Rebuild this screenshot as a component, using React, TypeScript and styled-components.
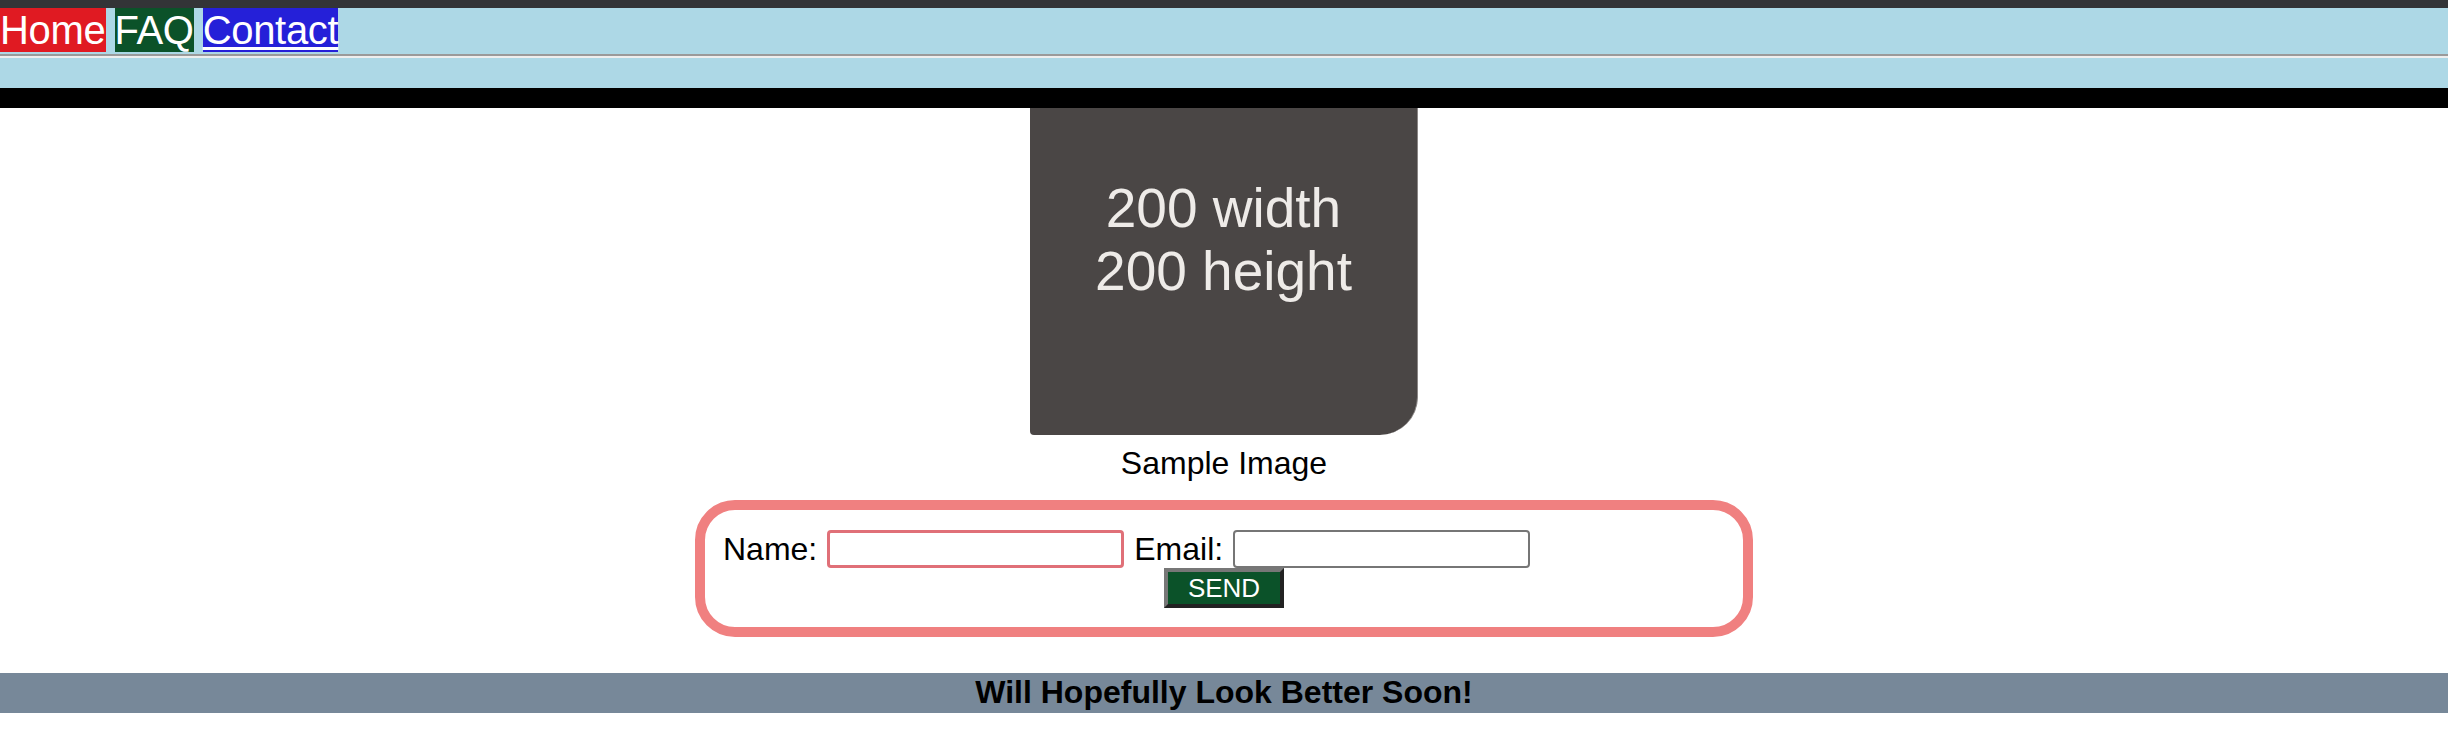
import React from "react";
import styled, { createGlobalStyle } from "styled-components";

const GlobalStyle = createGlobalStyle`
  html, body {
    margin: 0;
    padding: 0;
    background: #ffffff;
  }
  body {
    font-family: "Liberation Sans", Arial, Helvetica, sans-serif;
    color: #000;
  }
  * { box-sizing: border-box; }
`;

const TopStrip = styled.div`
  height: 8px;
  background: #333437;
`;

const Header = styled.header`
  background: #add8e6;
  padding-bottom: 30px;
`;

const Nav = styled.nav`
  display: flex;
  align-items: flex-start;
  gap: 9px;
  height: 44px;
`;

const NavLink = styled.a<{ $bg: string; $underline?: boolean }>`
  display: block;
  background: ${(p) => p.$bg};
  color: #ffffff;
  font-size: 40px;
  letter-spacing: -0.3px;
  line-height: 44px;
  height: 44px;
  text-decoration: ${(p) => (p.$underline ? "underline" : "none")};
  text-decoration-thickness: 3px;
  text-underline-offset: 3px;
  cursor: pointer;
`;

const Rule = styled.hr`
  margin: 2px 0 0 0;
  height: 0;
  border: none;
  border-top: 2px solid #9a9a9a;
  border-bottom: 2px solid #eeeeee;
`;

const BlackBar = styled.div`
  height: 20px;
  background: #000000;
`;

const Main = styled.main`
  display: flex;
  flex-direction: column;
  align-items: center;
`;

const Figure = styled.figure`
  margin: 0;
  display: flex;
  flex-direction: column;
  align-items: center;
`;

const ImageBox = styled.div`
  width: 388px;
  height: 327px;
  background: #4a4645;
  border-bottom-right-radius: 38px;
  border-bottom-left-radius: 4px;
  border-right: 1px solid #8a8685;
  display: flex;
  flex-direction: column;
  align-items: center;
  padding-top: 69px;
  color: #eeebe8;
  font-size: 55px;
  line-height: 63px;
`;

const Caption = styled.figcaption`
  margin-top: 10px;
  font-size: 32px;
  line-height: 37px;
`;

const Form = styled.form`
  margin-top: 18px;
  width: 1058px;
  border: 10px solid #f08080;
  border-radius: 40px;
  padding: 20px 18px 19px;
  display: flex;
  flex-direction: column;
`;

const FieldRow = styled.div`
  display: flex;
  align-items: center;
  gap: 10px;
  height: 38px;
`;

const Label = styled.label`
  font-size: 32px;
  line-height: 37px;
`;

const TextInput = styled.input<{ $accent?: boolean }>`
  width: 297px;
  height: 38px;
  margin: 0;
  border: ${(p) => (p.$accent ? "3px solid #e07078" : "2px solid #767676")};
  border-radius: 4px;
  background: #ffffff;
  font-size: 20px;
  font-family: inherit;
  padding: 2px 6px;
  outline: none;
`;

const ButtonRow = styled.div`
  display: flex;
  justify-content: center;
`;

const SendButton = styled.button`
  width: 120px;
  height: 40px;
  margin: 0;
  padding: 0;
  background: #0b5229;
  color: #ffffff;
  font-family: inherit;
  font-size: 26px;
  line-height: 32px;
  border-style: solid;
  border-width: 4px;
  border-color: #777777 #222222 #222222 #777777;
  cursor: pointer;
`;

const Footer = styled.footer`
  margin-top: 36px;
  height: 40px;
  background: #778899;
  text-align: center;
  font-weight: bold;
  font-size: 32px;
  line-height: 38px;
`;

export default function App() {
  return (
    <>
      <GlobalStyle />
      <TopStrip />
      <Header>
        <Nav>
          <NavLink $bg="#e01a22">Home</NavLink>
          <NavLink $bg="#0b5229">FAQ</NavLink>
          <NavLink $bg="#2520d8" $underline>
            Contact
          </NavLink>
        </Nav>
        <Rule />
      </Header>
      <BlackBar />
      <Main>
        <Figure>
          <ImageBox>
            <span>200 width</span>
            <span>200 height</span>
          </ImageBox>
          <Caption>Sample Image</Caption>
        </Figure>
        <Form onSubmit={(e) => e.preventDefault()}>
          <FieldRow>
            <Label htmlFor="name">Name:</Label>
            <TextInput id="name" type="text" $accent />
            <Label htmlFor="email">Email:</Label>
            <TextInput id="email" type="text" />
          </FieldRow>
          <ButtonRow>
            <SendButton type="submit">SEND</SendButton>
          </ButtonRow>
        </Form>
      </Main>
      <Footer>Will Hopefully Look Better Soon!</Footer>
    </>
  );
}
